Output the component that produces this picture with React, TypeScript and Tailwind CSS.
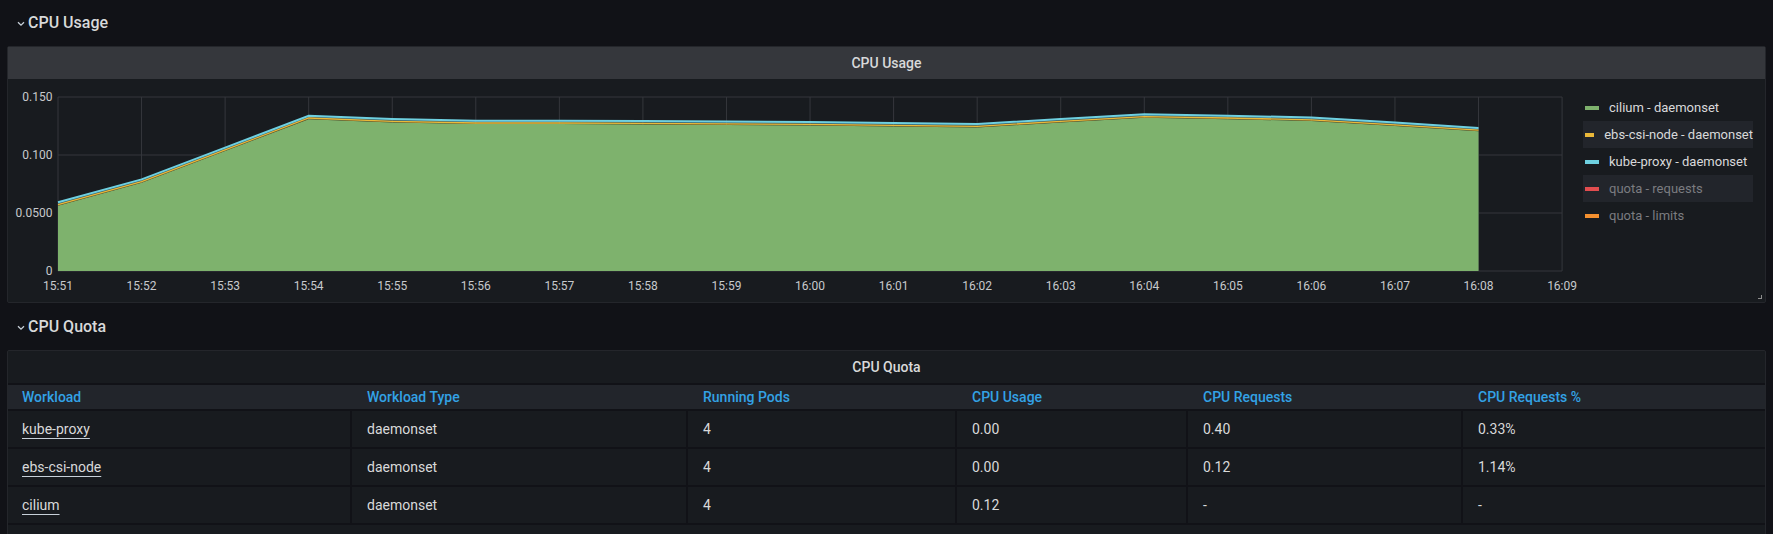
import React from "react";

const minutes = [
  "15:51", "15:52", "15:53", "15:54", "15:55", "15:56", "15:57", "15:58", "15:59",
  "16:00", "16:01", "16:02", "16:03", "16:04", "16:05", "16:06", "16:07", "16:08", "16:09",
];

// cilium usage per minute, 15:51 .. 16:08
const cilium = [
  0.0562, 0.076, 0.1034, 0.1309, 0.128, 0.1266, 0.1266, 0.1263, 0.1259,
  0.1254, 0.1246, 0.1237, 0.128, 0.1321, 0.1309, 0.1293, 0.125, 0.1204,
];
const EBS = 0.001;
const KUBE = 0.002;

const LEFT = 50;
const TOP = 18;
const BOTTOM = 192;
const STEP = 83.56;
const RIGHT = LEFT + STEP * 18;

const xOf = (i: number) => LEFT + i * STEP;
const yOf = (v: number) => BOTTOM - (v / 0.15) * (BOTTOM - TOP);

const pts = (offset: number) =>
  cilium.map((v, i) => `${xOf(i).toFixed(1)},${yOf(v + offset).toFixed(1)}`).join(" ");

const band = (lo: number, hi: number) => {
  const top = cilium.map((v, i) => `${xOf(i).toFixed(1)},${yOf(v + hi).toFixed(1)}`);
  const bottom = cilium
    .map((v, i) => `${xOf(i).toFixed(1)},${yOf(v + lo).toFixed(1)}`)
    .reverse();
  return [...top, ...bottom].join(" ");
};

const legend = [
  { name: "cilium - daemonset", color: "#7eb26d", dim: false },
  { name: "ebs-csi-node - daemonset", color: "#eab839", dim: false },
  { name: "kube-proxy - daemonset", color: "#6ed0e0", dim: false },
  { name: "quota - requests", color: "#e24d4f", dim: true },
  { name: "quota - limits", color: "#f4902f", dim: true },
];

const rows = [
  ["kube-proxy", "daemonset", "4", "0.00", "0.40", "0.33%"],
  ["ebs-csi-node", "daemonset", "4", "0.00", "0.12", "1.14%"],
  ["cilium", "daemonset", "4", "0.12", "-", "-"],
];

const headers = ["Workload", "Workload Type", "Running Pods", "CPU Usage", "CPU Requests", "CPU Requests %"];
const cols = "grid grid-cols-[342px_336px_269px_231px_275px_1fr]";

const RowHeader = ({ title, h }: { title: string; h: string }) => (
  <div className={`flex items-center pl-[17px] ${h}`}>
    <svg width="8" height="6" viewBox="0 0 8 6" className="mt-[2px]">
      <path d="M1 1.2 L4 4.2 L7 1.2" fill="none" stroke="#c7d0d9" strokeWidth="1.3" />
    </svg>
    <span className="ml-[3px] text-[16px] font-medium text-[#d8d9da]">{title}</span>
  </div>
);

const Chart = () => (
  <svg width="1575" height="223" viewBox="0 0 1575 223" className="shrink-0">
    {[0, 1, 2, 3].map((k) => (
      <line key={k} x1={LEFT} x2={RIGHT} y1={TOP + k * 58} y2={TOP + k * 58} stroke="#35373c" strokeWidth="1" />
    ))}
    {minutes.map((_, i) => (
      <line key={i} x1={xOf(i)} x2={xOf(i)} y1={TOP} y2={BOTTOM} stroke="#35373c" strokeWidth="1" />
    ))}

    <polygon
      points={`${xOf(0)},${BOTTOM} ${pts(0)} ${xOf(17)},${BOTTOM}`}
      fill="#7eb26d"
    />
    <polygon points={band(0, EBS)} fill="#eab839" fillOpacity="0.35" />
    <polygon points={band(EBS, EBS + KUBE)} fill="#6ed0e0" fillOpacity="0.35" />
    <polyline points={pts(EBS)} fill="none" stroke="#eab839" strokeWidth="1.3" />
    <polyline points={pts(EBS + KUBE)} fill="none" stroke="#6ed0e0" strokeWidth="2" />

    <g fontFamily="Roboto, sans-serif" fontSize="12" fill="#c7c9cc">
      {["0.150", "0.100", "0.0500", "0"].map((t, k) => (
        <text key={t} x="44.5" y={TOP + k * 58 + 4} textAnchor="end">
          {t}
        </text>
      ))}
      {minutes.map((m, i) => (
        <text key={m} x={xOf(i)} y="211" textAnchor="middle">
          {m}
        </text>
      ))}
    </g>
  </svg>
);

const Legend = () => (
  <div className="w-[170px] pt-[15px]">
    {legend.map((s, i) => (
      <div
        key={s.name}
        className={`flex h-[27px] items-center pl-[2px] text-[13px] ${i % 2 === 1 ? "bg-[#22252b]" : ""} ${
          s.dim ? "text-[#7b7c80]" : "text-[#d8d9da]"
        }`}
      >
        <span className="h-[4px] w-[14px]" style={{ backgroundColor: s.color }} />
        <span className="ml-[10px] whitespace-nowrap">{s.name}</span>
      </div>
    ))}
  </div>
);

export default function App() {
  return (
    <div className="h-[534px] w-full overflow-hidden bg-[#111217] font-['Roboto',sans-serif] text-[#ccccdc]">
      <RowHeader title="CPU Usage" h="h-[46px]" />

      <div className="relative mx-[7px] h-[257px] rounded-[2px] border border-[#24262b] bg-[#181b1f]">
        <div className="flex h-[32px] items-center justify-center bg-[#35373c] text-[14px] font-medium text-[#d8d9da]">
          CPU Usage
        </div>
        <div className="flex h-[223px]">
          <Chart />
          <Legend />
        </div>
        <div className="absolute bottom-[3px] right-[3px] h-[4px] w-[4px] border-b border-r border-[#8e8e8e]" />
      </div>

      <RowHeader title="CPU Quota" h="h-[47px]" />

      <div className="mx-[7px] rounded-[2px] border border-[#24262b] bg-[#181b1f] pb-[40px]">
        <div className="flex h-[32px] items-center justify-center text-[14px] font-medium text-[#d8d9da]">
          CPU Quota
        </div>
        <div className={`${cols} h-[28px] border-y-2 border-[#111217] bg-[#22252b]`}>
          {headers.map((h, i) => (
            <div
              key={h}
              className={`flex items-center text-[14px] font-medium text-[#33a2e5] ${
                i === 0 ? "pl-[14px]" : "border-l-2 border-transparent pl-[15px]"
              }`}
            >
              {h}
            </div>
          ))}
        </div>
        {rows.map((r) => (
          <div key={r[0]} className={`${cols} h-[38px] border-b-2 border-[#111217]`}>
            {r.map((c, i) => (
              <div
                key={i}
                className={`flex items-center text-[14px] text-[#d8d9da] ${
                  i === 0 ? "pl-[14px]" : "border-l-2 border-[#111217] pl-[15px]"
                }`}
              >
                {i === 0 ? (
                  <span className="underline decoration-[#c7d0d9] underline-offset-[4px]">{c}</span>
                ) : (
                  c
                )}
              </div>
            ))}
          </div>
        ))}
      </div>
    </div>
  );
}
